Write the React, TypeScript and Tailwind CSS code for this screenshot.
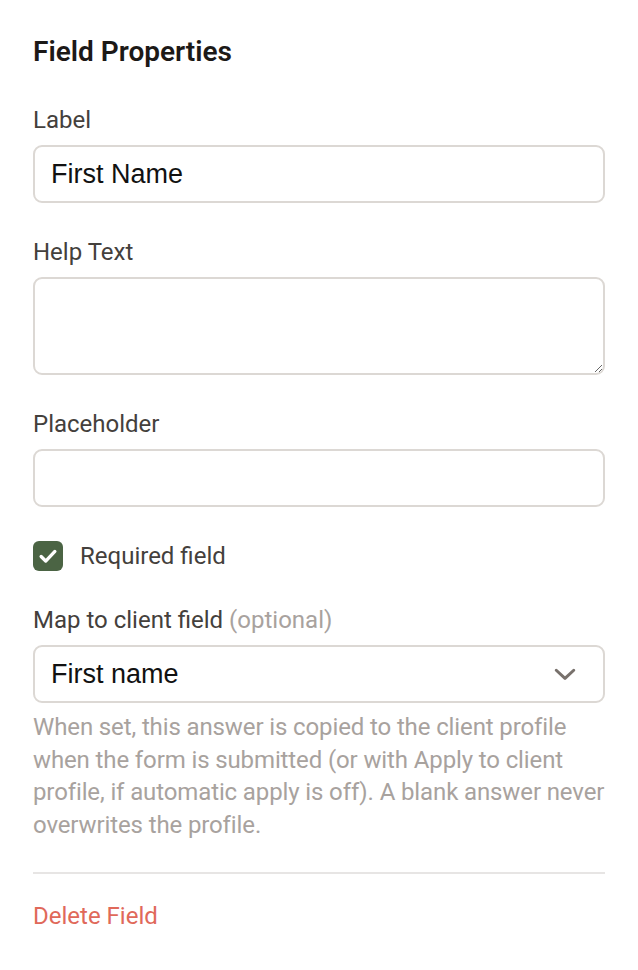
import React from "react";

const Label = ({ children }: { children: React.ReactNode }) => (
  <div className="text-[24px] leading-[26px] text-[#44403c] mb-3">{children}</div>
);

const inputFont = { fontFamily: "'Liberation Sans', Arial, sans-serif" };

export default function App() {
  return (
    <div
      className="w-[638px] min-h-[970px] bg-white px-[33px] pt-[36px]"
      style={{ fontFamily: "Roboto, 'Liberation Sans', sans-serif" }}
    >
      <h2 className="text-[28px] leading-[32px] font-semibold text-[#1c1917] mb-[39px]">
        Field Properties
      </h2>

      <Label>Label</Label>
      <input
        type="text"
        defaultValue="First Name"
        className="w-full h-[58px] rounded-[9px] border-2 border-[#dcd8d4] px-[16px] text-[27px] text-[#111] outline-none"
        style={inputFont}
      />

      <div className="mt-[36px]">
        <Label>Help Text</Label>
        <textarea
          className="block w-full h-[98px] rounded-[9px] border-2 border-[#dcd8d4] px-[16px] py-2 text-[27px] outline-none"
          style={inputFont}
        />
      </div>

      <div className="mt-[36px]">
        <Label>Placeholder</Label>
        <input
          type="text"
          className="w-full h-[58px] rounded-[9px] border-2 border-[#dcd8d4] px-[16px] text-[27px] outline-none"
          style={inputFont}
        />
      </div>

      <div className="mt-[34px] flex items-center gap-[17px]">
        <div className="w-[30px] h-[30px] rounded-[6px] bg-[#4b6444] flex items-center justify-center">
          <svg width="22" height="22" viewBox="0 0 24 24" fill="none">
            <path d="M4.5 12.5l5 5L19.5 7" stroke="white" strokeWidth="3.6" strokeLinecap="round" strokeLinejoin="round" />
          </svg>
        </div>
        <span className="text-[24px] leading-[26px] text-[#44403c]">Required field</span>
      </div>

      <div className="mt-[36px]">
        <Label>
          Map to client field <span className="text-[#a8a29e]">(optional)</span>
        </Label>
        <div className="w-full h-[58px] rounded-[9px] border-2 border-[#dcd8d4] px-[16px] flex items-center justify-between">
          <span className="text-[27px] text-[#111]" style={inputFont}>
            First name
          </span>
          <svg width="30" height="30" viewBox="0 0 24 24" fill="none" className="mr-[7px]">
            <path d="M5 9l7 6.5L19 9" stroke="#78716c" strokeWidth="2.4" strokeLinecap="round" strokeLinejoin="round" />
          </svg>
        </div>
        <p className="mt-[8px] text-[24px] leading-[32.5px] tracking-[-0.12px] text-[#a8a29e]">
          When set, this answer is copied to the client profile when the form is submitted (or with Apply to client
          profile, if automatic apply is off). A blank answer never overwrites the profile.
        </p>
      </div>

      <div className="mt-[31px] border-t-2 border-[#e7e5e4] pt-[29px]">
        <button className="text-[24px] leading-[26px] text-[#e0695a]">Delete Field</button>
      </div>
    </div>
  );
}
